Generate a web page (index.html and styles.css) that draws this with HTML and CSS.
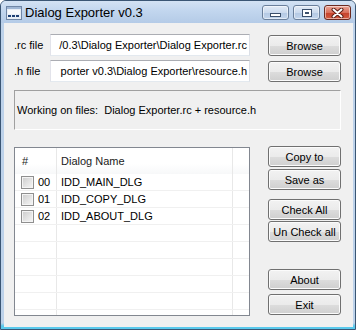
FILE: index.html
```html
<!DOCTYPE html>
<html lang="en">
<head>
    <meta charset="UTF-8">
    <title>Dialog Exporter v0.3</title>
    <link rel="stylesheet" href="styles.css">
</head>
<body>
    <div class="window">
        <div class="titlebar">
            <svg class="app-icon" width="16" height="14" viewBox="0 0 16 14">
                <rect x="0.5" y="0.5" width="15" height="13" fill="#e6edf6" stroke="#6f86a6"/>
                <rect x="1" y="1" width="14" height="2" fill="#9fb6d4"/>
                <rect x="2" y="9" width="3" height="2" fill="#1d3f74"/>
                <rect x="6" y="9" width="3" height="2" fill="#1d3f74"/>
                <rect x="10" y="9" width="3" height="2" fill="#1d3f74"/>
                <rect x="2" y="4" width="12" height="4" fill="#f7f9fc"/>
            </svg>
            <span class="title">Dialog Exporter v0.3</span>
            <div class="caption-btns">
                <span class="cap cap-min"><i></i></span>
                <span class="cap cap-max"><i></i></span>
                <span class="cap cap-close">
                    <svg width="13" height="10" viewBox="0 0 13 10">
                        <path d="M2.5 1.5 L10.5 8.5 M10.5 1.5 L2.5 8.5" stroke="#5a1d14" stroke-width="4" stroke-linecap="round"/>
                        <path d="M2.5 1.5 L10.5 8.5 M10.5 1.5 L2.5 8.5" stroke="#ffffff" stroke-width="2" stroke-linecap="round"/>
                    </svg>
                </span>
            </div>
        </div>

        <div class="frame">
            <div class="client">
                <div class="file-row">
                    <label>.rc file</label>
                    <div class="edit"><span>/0.3\Dialog Exporter\Dialog Exporter.rc</span></div>
                    <button>Browse</button>
                </div>
                <div class="file-row second">
                    <label>.h file</label>
                    <div class="edit"><span>porter v0.3\Dialog Exporter\resource.h</span></div>
                    <button>Browse</button>
                </div>

                <div class="status">Working on files:&nbsp; Dialog Exporter.rc + resource.h</div>

                <div class="main">
                    <div class="listview">
                        <div class="lv-head">
                            <span class="c1">#</span>
                            <span class="c2">Dialog Name</span>
                            <span class="c3"></span>
                        </div>
                        <div class="lv-row">
                            <span class="c1"><i class="check"></i>00</span>
                            <span class="c2">IDD_MAIN_DLG</span>
                            <span class="c3"></span>
                        </div>
                        <div class="lv-row">
                            <span class="c1"><i class="check"></i>01</span>
                            <span class="c2">IDD_COPY_DLG</span>
                            <span class="c3"></span>
                        </div>
                        <div class="lv-row">
                            <span class="c1"><i class="check"></i>02</span>
                            <span class="c2">IDD_ABOUT_DLG</span>
                            <span class="c3"></span>
                        </div>
                        <div class="lv-row"><span class="c1"></span><span class="c2"></span><span class="c3"></span></div>
                        <div class="lv-row"><span class="c1"></span><span class="c2"></span><span class="c3"></span></div>
                        <div class="lv-row"><span class="c1"></span><span class="c2"></span><span class="c3"></span></div>
                        <div class="lv-row"><span class="c1"></span><span class="c2"></span><span class="c3"></span></div>
                        <div class="lv-row"><span class="c1"></span><span class="c2"></span><span class="c3"></span></div>
                        <div class="lv-row"><span class="c1"></span><span class="c2"></span><span class="c3"></span></div>
                    </div>

                    <div class="side">
                        <button>Copy to</button>
                        <button class="gap-xs">Save as</button>
                        <button class="gap-m">Check All</button>
                        <button class="gap-0">Un Check all</button>
                        <button class="gap-l">About</button>
                        <button class="gap-s">Exit</button>
                    </div>
                </div>
            </div>
        </div>
    </div>
</body>
</html>
```

FILE: styles.css
```css
* {
    box-sizing: border-box;
}
body {
    margin: 0;
    font-family: "Liberation Sans", Arial, sans-serif;
    font-size: 11px;
    color: #000;
    background: #fff;
}
.window {
    width: 356px;
    height: 330px;
    border: 1px solid #3b5674;
    border-radius: 6px 6px 0 0;
    background: #bdd2ea;
    display: flex;
    flex-direction: column;
    overflow: hidden;
}

/* title bar */
.titlebar {
    height: 22px;
    flex: none;
    display: flex;
    align-items: flex-start;
    padding: 0 4px 0 5px;
    background: linear-gradient(#d3e2f3 0%, #c2d6ee 45%, #b4cbe7 100%);
}
.app-icon {
    margin-top: 5px;
    flex: none;
}
.title {
    margin: 4px 0 0 3px;
    font-size: 13px;
    line-height: 15px;
    color: #000;
}
.caption-btns {
    margin-left: auto;
    margin-top: 4px;
    display: flex;
    gap: 4px;
}
.cap {
    width: 27px;
    height: 15px;
    border: 1px solid #6a7f9b;
    border-radius: 3px;
    display: flex;
    align-items: center;
    justify-content: center;
    background: linear-gradient(#e2ebf6 0%, #cbdaee 50%, #b3c8e3 51%, #c3d5ec 100%);
    box-shadow: inset 0 0 0 1px rgba(255, 255, 255, 0.5);
}
.cap-min i {
    width: 11px;
    height: 4px;
    margin-top: 5px;
    background: #fff;
    border: 1px solid #3b4f6b;
}
.cap-max i {
    width: 10px;
    height: 8px;
    border: 1px solid #3b4f6b;
    background: #fff;
    box-shadow: inset 0 0 0 2px #fff, inset 0 0 0 3px #3b4f6b;
}
.cap-close {
    border-color: #6b2a20;
    background: linear-gradient(#eba596 0%, #d9705c 50%, #c4412b 51%, #d35a40 100%);
}

/* client area */
.frame {
    flex: 1;
    padding: 0 2px 2px 3px;
    background: linear-gradient(#bdd2ea 0, #bdd2ea 300px, #59c9ec 303px);
}
.client {
    height: 304px;
    background: #f0f0f0;
    padding: 11px 12px 0 10px;
}
.file-row {
    display: grid;
    grid-template-columns: 36px 200px 18px 73px;
    height: 22px;
    align-items: center;
}
.file-row.second {
    margin-top: 4px;
}
.file-row button {
    grid-column: 4;
    align-self: end;
}
.edit {
    height: 22px;
    background: #fff;
    border: 1px solid #abadb3;
    border-color: #abadb3 #dbdfe6 #e3e9ef #e2e3ea;
    display: flex;
    justify-content: flex-end;
    align-items: center;
    overflow: hidden;
    white-space: nowrap;
    padding: 0 2px 0 3px;
}
button {
    font: inherit;
    color: #000;
    height: 21px;
    padding: 0;
    border: 1px solid #707070;
    border-radius: 3px;
    background: linear-gradient(#f2f2f2 0%, #ebebeb 50%, #dddddd 51%, #cfcfcf 100%);
    box-shadow: inset 0 0 0 1px #fbfbfb;
    cursor: pointer;
}
.status {
    margin-top: 8px;
    height: 40px;
    border: 1px solid;
    border-color: #a0a0a0 #fff #fff #a0a0a0;
    display: flex;
    align-items: center;
    padding-left: 2px;
}

/* list + side buttons */
.main {
    margin-top: 16px;
    display: grid;
    grid-template-columns: 236px 18px 73px;
    align-items: start;
}
.listview {
    margin-top: 1px;
    height: 169px;
    background: #fff;
    border: 1px solid #828790;
    overflow: hidden;
}
.lv-head,
.lv-row {
    display: flex;
}
.lv-head {
    height: 26px;
    align-items: center;
    background: linear-gradient(#fff 0%, #fff 60%, #f7f8f9 100%);
    color: #1a1a1a;
}
.lv-head span {
    height: 100%;
    display: flex;
    align-items: center;
}
.lv-row {
    height: 17px;
    border-bottom: 1px solid #f0f0f0;
}
.lv-row span {
    display: flex;
    align-items: center;
}
.c1 {
    width: 42px;
    padding-left: 6px;
    border-right: 1px solid #e8e8e8;
}
.lv-head .c1 {
    padding-left: 7px;
}
.c2 {
    width: 176px;
    padding-left: 4px;
    border-right: 1px solid #e8e8e8;
}
.c3 {
    flex: 1;
}
.check {
    width: 13px;
    height: 13px;
    margin-right: 4px;
    border: 1px solid #8f8f8f;
    background: linear-gradient(135deg, #cbcbcb 0%, #e6e6e6 60%, #f6f6f6 100%);
    box-shadow: inset 0 0 0 1px #f4f4f4;
}
.side {
    grid-column: 3;
    display: flex;
    flex-direction: column;
}
.side .gap-0 { margin-top: 1px; }
.side .gap-xs { margin-top: 2px; }
.side .gap-s { margin-top: 4px; }
.side .gap-m { margin-top: 9px; }
.side .gap-l { margin-top: 27px; }
```
